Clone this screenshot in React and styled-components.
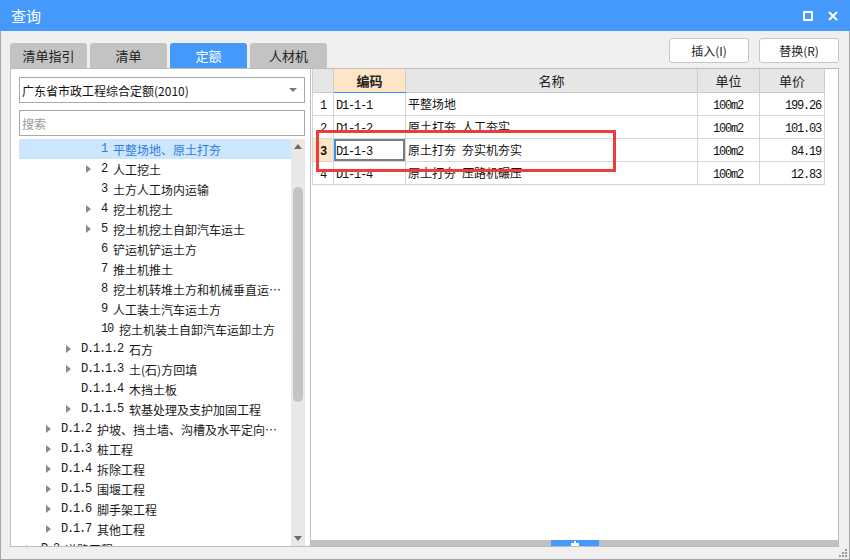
import React from "react";
import styled, { createGlobalStyle } from "styled-components";

const GlobalStyle = createGlobalStyle`
  html, body {
    margin: 0;
    padding: 0;
    overflow: hidden;
    background: #f0f0f0;
  }
  body {
    font-family: "Noto Sans CJK SC", "Noto Sans", sans-serif;
    color: #1e1e1e;
  }
  * { box-sizing: border-box; }
`;

const treeItems = [
  { level: 4, code: "1", name: "平整场地、原土打夯", selected: true },
  { level: 4, code: "2", name: "人工挖土", arrow: true },
  { level: 4, code: "3", name: "土方人工场内运输" },
  { level: 4, code: "4", name: "挖土机挖土", arrow: true },
  { level: 4, code: "5", name: "挖土机挖土自卸汽车运土", arrow: true },
  { level: 4, code: "6", name: "铲运机铲运土方" },
  { level: 4, code: "7", name: "推土机推土" },
  { level: 4, code: "8", name: "挖土机转堆土方和机械垂直运…" },
  { level: 4, code: "9", name: "人工装土汽车运土方" },
  { level: 4, code: "10", name: "挖土机装土自卸汽车运卸土方" },
  { level: 3, code: "D.1.1.2", name: "石方", arrow: true },
  { level: 3, code: "D.1.1.3", name: "土(石)方回填", arrow: true },
  { level: 3, code: "D.1.1.4", name: "木挡土板" },
  { level: 3, code: "D.1.1.5", name: "软基处理及支护加固工程", arrow: true },
  { level: 2, code: "D.1.2", name: "护坡、挡土墙、沟槽及水平定向…", arrow: true },
  { level: 2, code: "D.1.3", name: "桩工程", arrow: true },
  { level: 2, code: "D.1.4", name: "拆除工程", arrow: true },
  { level: 2, code: "D.1.5", name: "围堰工程", arrow: true },
  { level: 2, code: "D.1.6", name: "脚手架工程", arrow: true },
  { level: 2, code: "D.1.7", name: "其他工程", arrow: true },
  { level: 1, code: "D.2", name: "道路工程", arrow: true },
];

const rows = [
  { no: 1, code: "D1-1-1", name: "平整场地", unit: "100m2", price: "199.26" },
  { no: 2, code: "D1-1-2", name: "原土打夯\u2002人工夯实", unit: "100m2", price: "101.03" },
  { no: 3, code: "D1-1-3", name: "原土打夯\u2002夯实机夯实", unit: "100m2", price: "84.19", active: true },
  { no: 4, code: "D1-1-4", name: "原土打夯\u2002压路机碾压", unit: "100m2", price: "12.83" },
];

const tabs = ["清单指引", "清单", "定额", "人材机"];

const App = () => {
  return (
    <Window>
      <GlobalStyle />
      <TitleBar>
        <span>查询</span>
        <TitleIcons>
          <svg width="10" height="10" viewBox="0 0 10 10">
            <rect x="1" y="1" width="8" height="8" fill="none" stroke="#fff" strokeWidth="2" />
          </svg>
          <svg width="10" height="10" viewBox="0 0 10 10">
            <path d="M1 1 L9 9 M9 1 L1 9" stroke="#fff" strokeWidth="2" />
          </svg>
        </TitleIcons>
      </TitleBar>
      <Body>
        <TopRow>
          <Tabs>
            {tabs.map((t) => (
              <Tab key={t} $active={t === "定额"}>
                {t}
              </Tab>
            ))}
          </Tabs>
          <Actions>
            <ActionButton>插入(I)</ActionButton>
            <ActionButton>替换(R)</ActionButton>
          </Actions>
        </TopRow>
        <Content>
          <LeftPanel>
            <Select>
              广东省市政工程综合定额(2010)
              <svg width="8" height="5" viewBox="0 0 8 5">
                <path d="M0 0 L8 0 L4 4 Z" fill="#7a7a7a" />
              </svg>
            </Select>
            <Search>搜索</Search>
            <Tree>
              <TreeList>
                {treeItems.map((it, i) => (
                  <TreeRow key={i} $level={it.level} $selected={it.selected}>
                    <Caret>
                      {it.arrow && (
                        <svg width="5" height="8" viewBox="0 0 5 8">
                          <path d="M0 0 L5 4 L0 8 Z" fill="#8a8a8a" />
                        </svg>
                      )}
                    </Caret>
                    <Mono>{it.code}</Mono>
                    <TreeName>{it.name}</TreeName>
                  </TreeRow>
                ))}
              </TreeList>
              <VScroll>
                <svg width="8" height="5" viewBox="0 0 8 5">
                  <path d="M0 5 L8 5 L4 0 Z" fill="#6b6b6b" />
                </svg>
                <Thumb />
                <svg width="8" height="5" viewBox="0 0 8 5" style={{ marginTop: "auto" }}>
                  <path d="M0 0 L8 0 L4 5 Z" fill="#6b6b6b" />
                </svg>
              </VScroll>
            </Tree>
          </LeftPanel>
          <RightPanel>
            <GridArea>
              <Table>
                <colgroup>
                  <col style={{ width: 21 }} />
                  <col style={{ width: 72 }} />
                  <col style={{ width: 292 }} />
                  <col style={{ width: 62 }} />
                  <col style={{ width: 65 }} />
                </colgroup>
                <thead>
                  <tr>
                    <Th />
                    <Th $current>编码</Th>
                    <Th>名称</Th>
                    <Th>单位</Th>
                    <Th>单价</Th>
                  </tr>
                </thead>
                <tbody>
                  {rows.map((r) => (
                    <tr key={r.no}>
                      <NoCell $active={r.active}>
                        <Mono>{r.no}</Mono>
                      </NoCell>
                      <CodeCell $active={r.active}>
                        <Mono>{r.code}</Mono>
                      </CodeCell>
                      <Td>{r.name}</Td>
                      <Td $align="center">
                        <Mono>{r.unit}</Mono>
                      </Td>
                      <Td $align="right">
                        <Mono>{r.price}</Mono>
                      </Td>
                    </tr>
                  ))}
                </tbody>
              </Table>
              <Highlight />
            </GridArea>
            <SplitBar>
              <SplitThumb>
                <svg width="8" height="5" viewBox="0 0 8 5">
                  <path d="M3 0 H5 V2 H8 V5 H0 V2 H3 Z" fill="#fff" />
                </svg>
              </SplitThumb>
            </SplitBar>
          </RightPanel>
        </Content>
      </Body>
      <Grip>
        <svg width="10" height="10" viewBox="0 0 10 10">
          {[
            [8, 2],
            [5, 5],
            [8, 5],
            [2, 8],
            [5, 8],
            [8, 8],
          ].map(([x, y], i) => (
            <rect key={i} x={x - 1} y={y - 1} width="2" height="2" fill="#9a9a9a" />
          ))}
        </svg>
      </Grip>
    </Window>
  );
};

const Window = styled.div`
  position: relative;
  width: 850px;
  height: 560px;
  border: 1px solid #a6a6a6;
  border-top: none;
  background: #f0f0f0;
  display: flex;
  flex-direction: column;
`;

const TitleBar = styled.div`
  height: 31px;
  flex: none;
  background: #4599fb;
  color: #fff;
  display: flex;
  align-items: center;
  justify-content: space-between;
  padding: 0 11px 0 11px;
  font-size: 15px;
  margin: 0 -1px;
`;

const TitleIcons = styled.div`
  display: flex;
  align-items: center;
  gap: 15px;
  padding-right: 1px;
`;

const Body = styled.div`
  flex: 1;
  min-height: 0;
  display: flex;
  flex-direction: column;
  padding: 0 10px 12px 9px;
`;

const TopRow = styled.div`
  height: 37px;
  flex: none;
  display: flex;
  justify-content: space-between;
`;

const Tabs = styled.div`
  display: flex;
  align-items: flex-end;
  gap: 3px;
`;

const Tab = styled.div`
  width: 77px;
  height: 25px;
  border-radius: 3px 3px 0 0;
  background: ${(p) => (p.$active ? "#4599fb" : "#c3c3c3")};
  color: ${(p) => (p.$active ? "#fff" : "#222")};
  font-size: 13px;
  display: flex;
  align-items: center;
  justify-content: center;
`;

const Actions = styled.div`
  display: flex;
  gap: 10px;
  padding-top: 7px;
`;

const ActionButton = styled.div`
  width: 80px;
  height: 25px;
  background: #fff;
  border: 1px solid #c6c6c6;
  border-radius: 3px;
  font-size: 12px;
  color: #222;
  display: flex;
  align-items: center;
  justify-content: center;
`;

const Content = styled.div`
  flex: 1;
  min-height: 0;
  display: flex;
`;

const LeftPanel = styled.div`
  width: 300px;
  flex: none;
  background: #fff;
  border: 1px solid #bdbdbd;
  border-right: none;
  padding: 8px 5px 0 8px;
  display: flex;
  flex-direction: column;
`;

const Select = styled.div`
  height: 26px;
  flex: none;
  border: 1px solid #a8a8a8;
  display: flex;
  align-items: center;
  justify-content: space-between;
  padding: 0 7px 0 2px;
  font-size: 12px;
  color: #111;
`;

const Search = styled.div`
  height: 26px;
  flex: none;
  margin-top: 7px;
  border: 1px solid #a8a8a8;
  display: flex;
  align-items: center;
  padding: 0 2px;
  font-size: 12px;
  color: #9a9a9a;
`;

const Tree = styled.div`
  flex: 1;
  min-height: 0;
  margin-top: 3px;
  display: flex;
  overflow: hidden;
`;

const TreeList = styled.div`
  flex: 1;
  min-width: 0;
  overflow: hidden;
`;

const TreeRow = styled.div`
  height: 20px;
  display: flex;
  align-items: center;
  white-space: nowrap;
  font-size: 12px;
  padding-left: ${(p) => 7 + (p.$level - 1) * 20}px;
  background: ${(p) => (p.$selected ? "#cce7fd" : "transparent")};
  color: ${(p) => (p.$selected ? "#2f7be0" : "#1a1a1a")};
`;

const Caret = styled.span`
  width: 15px;
  flex: none;
  display: flex;
  align-items: center;
`;

const TreeName = styled.span`
  margin-left: 6px;
`;

const Mono = styled.span`
  font-family: "Liberation Mono", "DejaVu Sans Mono", monospace;
  font-size: 12px;
  letter-spacing: -1.2px;
`;

const VScroll = styled.div`
  width: 14px;
  flex: none;
  background: #e8e8e8;
  display: flex;
  flex-direction: column;
  align-items: center;
  padding: 5px 0 5px;
`;

const Thumb = styled.div`
  width: 10px;
  height: 215px;
  margin-top: 38px;
  border-radius: 5px;
  background: #c4c4c4;
`;

const RightPanel = styled.div`
  flex: 1;
  min-width: 0;
  background: #fff;
  border: 1px solid #bdbdbd;
  display: flex;
  flex-direction: column;
`;

const GridArea = styled.div`
  position: relative;
  flex: 1;
  min-height: 0;
`;

const Table = styled.table`
  border-collapse: collapse;
  table-layout: fixed;
  width: 512px;
  font-size: 12px;
  margin-left: 1px;
`;

const Th = styled.th`
  height: 23px;
  padding: 0;
  font-weight: ${(p) => (p.$current ? 700 : 400)};
  font-size: 13px;
  color: #222;
  background: ${(p) => (p.$current ? "#fde5c6" : "#e6e6e6")};
  border: 1px solid #cdcdcd;
  border-top: none;
  ${(p) => p.$current && "border-bottom: 1px solid #3b8ee8;"}
`;

const Td = styled.td`
  height: 23px;
  padding: 0 3px 0 2px;
  border: 1px solid #d5d5d5;
  text-align: ${(p) => p.$align || "left"};
  white-space: nowrap;
  color: #111;
`;

const NoCell = styled(Td)`
  text-align: center;
  padding: 0;
  background: ${(p) => (p.$active ? "#fde5c6" : "#fff")};
  font-weight: ${(p) => (p.$active ? 700 : 400)};
`;

const CodeCell = styled(Td)`
  ${(p) =>
    p.$active &&
    "box-shadow: inset 2px 0 0 #3b8ee8, inset 0 0 0 2px #7c7c7c;"}
`;

const Highlight = styled.div`
  position: absolute;
  left: 5px;
  top: 61px;
  width: 300px;
  height: 42px;
  border: 3px solid #ef3b3b;
  pointer-events: none;
`;

const SplitBar = styled.div`
  height: 6px;
  flex: none;
  background: #c0c0c0;
  display: flex;
  justify-content: center;
`;

const SplitThumb = styled.div`
  width: 48px;
  background: #4599fb;
  display: flex;
  align-items: center;
  justify-content: center;
`;

const Grip = styled.div`
  position: absolute;
  right: 1px;
  bottom: 1px;
  display: flex;
`;

export default App;
